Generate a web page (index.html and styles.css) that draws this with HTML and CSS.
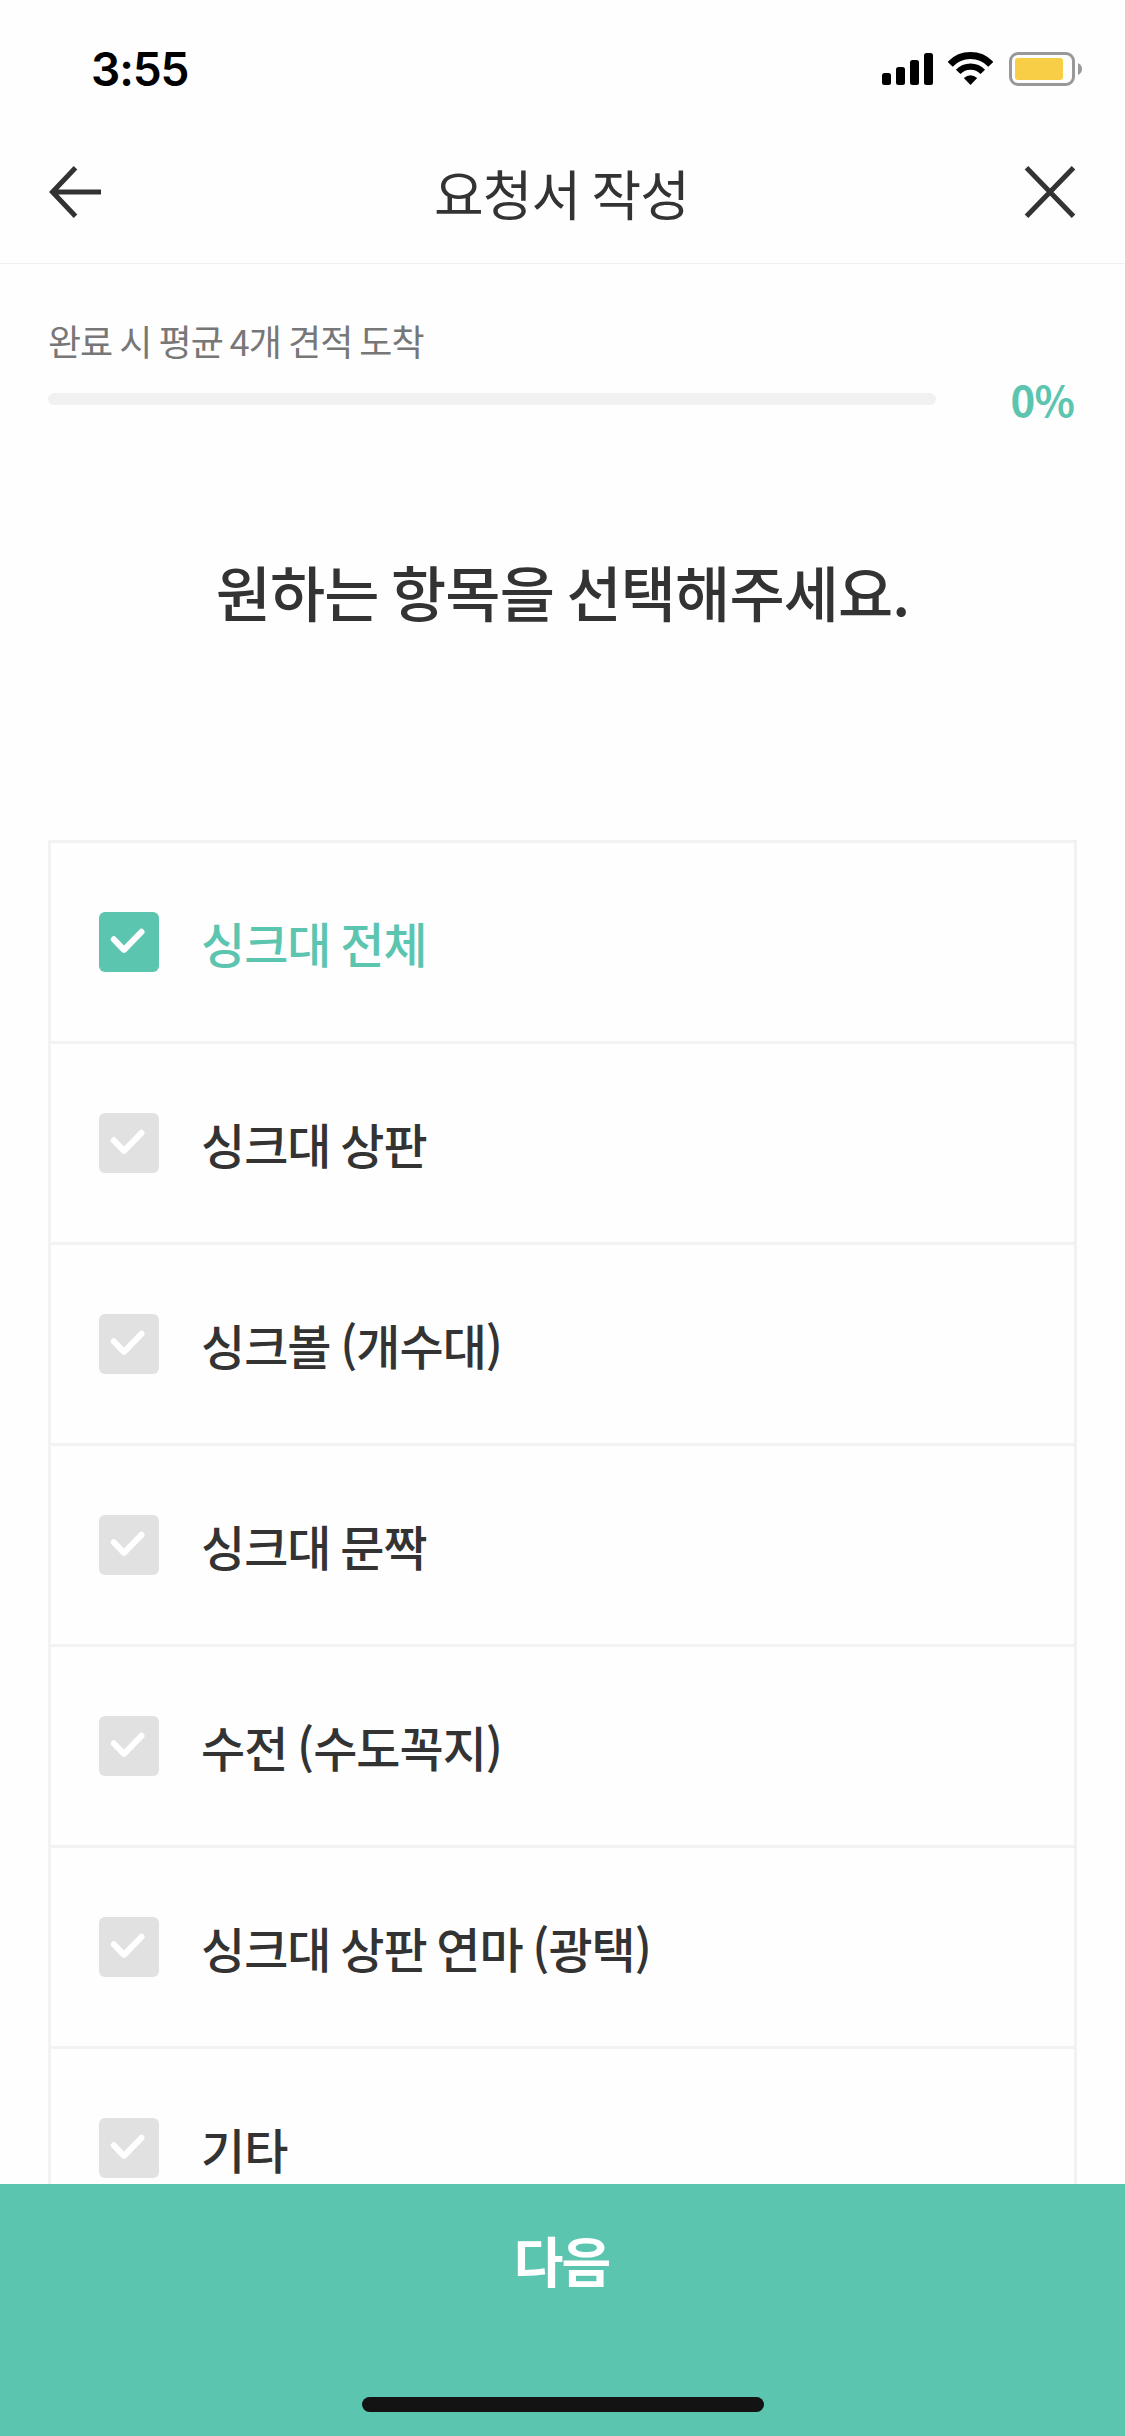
FILE: index.html
```html
<!DOCTYPE html>
<html lang="ko">
<head>
<meta charset="utf-8">
<title>요청서 작성</title>
<link rel="stylesheet" href="styles.css">
</head>
<body>
<svg class="defs" width="0" height="0" aria-hidden="true">
  <symbol id="check" viewBox="0 0 60 60"><path d="M14.8 27.3 25 37.8 42.5 19.8" fill="none" stroke="#fff" stroke-width="6" stroke-linecap="round" stroke-linejoin="round"/></symbol>
</svg>
<div class="screen">
  <div class="status">
    <span class="time">3:55</span>
    <div class="indicators">
      <svg class="signal" width="51" height="34" viewBox="0 0 51 34"><rect x="0" y="21" width="9" height="12" rx="2.5"/><rect x="14" y="15" width="9" height="18" rx="2.5"/><rect x="28" y="8" width="9" height="25" rx="2.5"/><rect x="42" y="1" width="9" height="32" rx="2.5"/></svg>
      <svg class="wifi" width="45" height="34" viewBox="0 0 45 34"><g fill="none" stroke="#000"><path d="M2.2 12.3A28 28 0 0 1 42.8 12.3" stroke-width="7"/><path d="M10.2 19.8A17 17 0 0 1 34.8 19.8" stroke-width="6.2"/></g><path d="M15.8 25.9Q22.5 20.4 29.2 25.9L22.5 33Z"/></svg>
      <svg class="battery" width="73" height="34" viewBox="0 0 73 34"><rect x="1.5" y="1.5" width="63" height="31" rx="7.5" fill="none" stroke="#999" stroke-width="3"/><rect x="6" y="6" width="48" height="22" rx="3" fill="#f7ce46"/><path d="M69 11Q73 13 73 17T69 23Z" fill="#999"/></svg>
    </div>
  </div>
  <header class="header">
    <svg class="icon" width="52" height="52" viewBox="0 0 52 52"><path d="M52 26H4M26.5 1.8 3.5 26 26.5 50.2"/></svg>
    <h1 class="title">요청서 작성</h1>
    <svg class="icon" width="52" height="52" viewBox="0 0 52 52"><path d="M2.5 1.8 49.5 50.2M49.5 1.8 2.5 50.2"/></svg>
  </header>
  <main class="content">
    <p class="hint">완료 시 평균 4개 견적 도착</p>
    <div class="progress">
      <div class="track"></div>
      <span class="percent">0%</span>
    </div>
    <h2 class="question">원하는 항목을 선택해주세요.</h2>
    <ul class="options">
      <li class="option selected"><svg class="box"><use href="#check"/></svg><span>싱크대 전체</span></li>
      <li class="option"><svg class="box"><use href="#check"/></svg><span>싱크대 상판</span></li>
      <li class="option"><svg class="box"><use href="#check"/></svg><span>싱크볼 (개수대)</span></li>
      <li class="option"><svg class="box"><use href="#check"/></svg><span>싱크대 문짝</span></li>
      <li class="option"><svg class="box"><use href="#check"/></svg><span>수전 (수도꼭지)</span></li>
      <li class="option"><svg class="box"><use href="#check"/></svg><span>싱크대 상판 연마 (광택)</span></li>
      <li class="option"><svg class="box"><use href="#check"/></svg><span>기타</span></li>
    </ul>
  </main>
  <footer class="footer">
    <div class="next">다음</div>
    <div class="home"></div>
  </footer>
</div>
</body>
</html>
```

FILE: styles.css
```css
* { box-sizing: border-box; margin: 0; padding: 0; }
body { background: #fefefe; color: #333; font-family: "Noto Sans CJK KR", sans-serif; letter-spacing: -0.9px; }
.defs { display: block; height: 0; }
.screen { display: flex; flex-direction: column; width: 1125px; height: 2436px; overflow: hidden; }

.status { display: flex; justify-content: space-between; height: 120px; padding: 52px 43px 0 91px; flex: none; }
.time { font: 600 46px/34px Inter, sans-serif; color: #000; letter-spacing: -1.1px; }
.indicators { display: flex; height: 34px; }
.wifi { margin-left: 15px; }
.battery { margin-left: 16px; }

.header { display: flex; align-items: center; justify-content: space-between; height: 144px; padding: 0 49px; border-bottom: 1px solid #f0f0f0; flex: none; }
.icon { fill: none; stroke: #333; stroke-width: 5; }
.title { font-size: 54px; font-weight: 400; line-height: 80px; word-spacing: -3px; margin-right: 2px; padding-top: 2px; }

.content { flex: 1; min-height: 0; overflow: hidden; padding: 49px 48px 0; }
.hint { color: #777; font-size: 36px; line-height: 54px; letter-spacing: -1px; word-spacing: -2px; }
.progress { display: flex; align-items: center; justify-content: space-between; height: 64px; padding-right: 3px; }
.track { width: 888px; height: 12px; border-radius: 6px; background: #f1f1f1; }
.percent { color: #5cc5b0; font-size: 42px; font-weight: 700; line-height: 62px; }
.question { margin-top: 115px; font-size: 60px; font-weight: 500; line-height: 90px; word-spacing: -3.36px; text-align: center; }
.options { margin-top: 204px; list-style: none; border: 3px solid #f2f2f2; }
.option { display: flex; align-items: center; height: 201px; padding-left: 48px; gap: 42px; border-bottom: 3px solid #f2f2f2; font-size: 48px; font-weight: 500; letter-spacing: -1px; word-spacing: -2.7px; white-space: nowrap; }
.selected { color: #5cc5b0; }
.box { width: 60px; height: 60px; border-radius: 6px; background: #e1e1e1; }
.selected .box { background: #5cc5b0; }

.footer { display: flex; flex-direction: column; align-items: center; justify-content: space-between; height: 252px; padding-bottom: 24px; background: #5cc5b0; flex: none; }
.next { color: #fff; font-size: 54px; font-weight: 700; line-height: 152px; letter-spacing: -2px; padding-right: 2px; }
.home { width: 402px; height: 15px; border-radius: 7.5px; background: #131313; }
```
